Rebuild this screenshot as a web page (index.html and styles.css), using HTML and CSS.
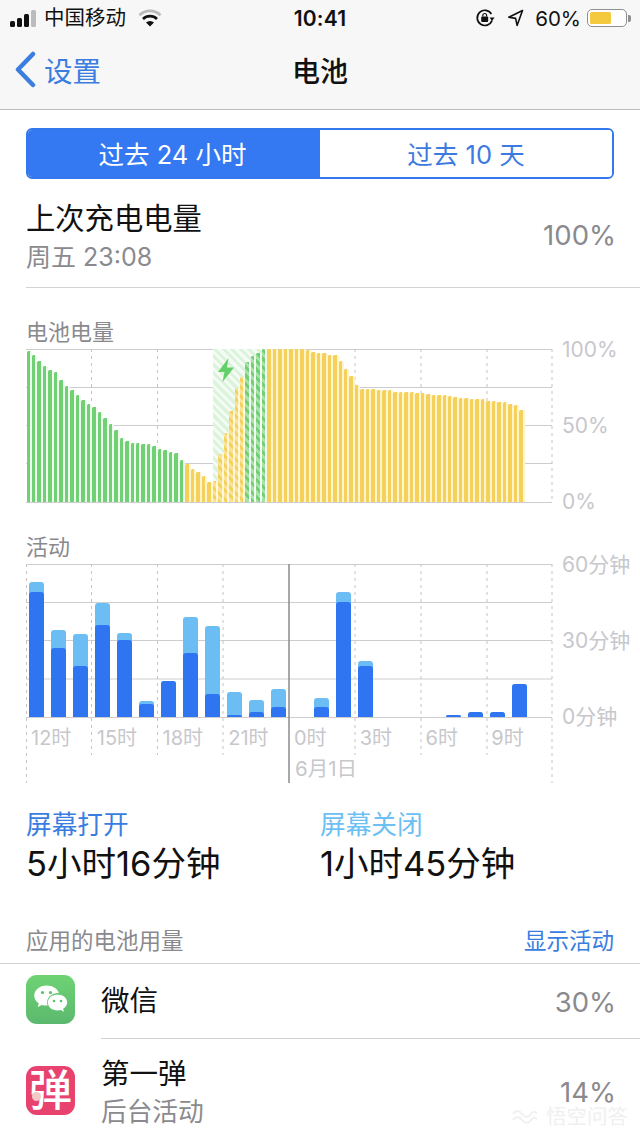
FILE: index.html
```html
<!DOCTYPE html>
<html lang="zh">
<head>
<meta charset="utf-8">
<title>电池</title>
<link rel="stylesheet" href="styles.css">
</head>
<body>
<div class="page">
  <header class="top">
    <div class="status">
      <div class="st-left">
        <span class="signal"><i></i><i></i><i></i><i class="off"></i></span>
        <span class="carrier">中国移动</span>
        <svg class="wifi" width="24" height="20" viewBox="0 0 24 20"><path d="M1.5 7.2a15 15 0 0 1 21 0" fill="none" stroke="#b9b9bb" stroke-width="2.6"/><path d="M5 11a10 10 0 0 1 14 0" fill="none" stroke="#111" stroke-width="2.6"/><path d="M8 14.6a5.6 5.6 0 0 1 8 0L12 18.6z" fill="#111"/></svg>
      </div>
      <div class="clock">10:41</div>
      <div class="st-right">
        <svg class="rot" width="20" height="20" viewBox="0 0 20 20"><path d="M17 12.5A7.6 7.6 0 1 1 16.4 6" fill="none" stroke="#111" stroke-width="1.7"/><path d="M14.6 9.6h5L17 13z" fill="#111"/><rect x="6.2" y="8.6" width="7" height="5.4" rx="1" fill="#111"/><path d="M7.8 8.6V7.4a1.9 1.9 0 0 1 3.8 0v1.2" fill="none" stroke="#111" stroke-width="1.2"/></svg>
        <svg class="loc" width="17" height="18" viewBox="0 0 17 18"><path d="M15.5 1.5 1.8 8.2l6.8 1.2 1.5 7z" fill="none" stroke="#111" stroke-width="1.6" stroke-linejoin="round"/></svg>
        <span class="pct">60%</span>
        <span class="battery"><span class="level"></span></span><span class="nub"></span>
      </div>
    </div>
    <nav class="nav">
      <div class="back">
        <svg width="22" height="37" viewBox="0 0 22 37"><path d="M19 3 4 18.500 19 34" fill="none" stroke="#3c7de0" stroke-width="4.500" stroke-linecap="round" stroke-linejoin="round"/></svg>
        <span>设置</span>
      </div>
      <h1>电池</h1>
      <div></div>
    </nav>
  </header>

  <div class="segment">
    <div class="seg on">过去 24 小时</div>
    <div class="seg">过去 10 天</div>
  </div>

  <section class="summary">
    <div>
      <div class="sum-title">上次充电电量</div>
      <div class="sum-sub">周五 23:08</div>
    </div>
    <div class="sum-val">100%</div>
  </section>

  <div class="chart-label first">电池电量</div>
  <div class="chart-row">
    <div class="plot">
      <svg class="grid-lines" width="528" height="155" viewBox="0 0 528 155">
        <g class="h"><line x1="0" x2="526" y1="0.5" y2="0.5"/><line x1="0" x2="526" y1="38.500" y2="38.500"/><line x1="0" x2="526" y1="76.500" y2="76.500"/><line x1="0" x2="526" y1="114.500" y2="114.500"/><line x1="0" x2="526" y1="153.500" y2="153.500"/></g>
        <g class="v"><line x1="65.500" x2="65.500" y1="0" y2="153"/><line x1="131.500" x2="131.500" y1="0" y2="153"/><line x1="197" x2="197" y1="0" y2="153"/><line x1="263" x2="263" y1="0" y2="153"/><line x1="329" x2="329" y1="0" y2="153"/><line x1="395" x2="395" y1="0" y2="153"/><line x1="461" x2="461" y1="0" y2="153"/><line x1="526" x2="526" y1="0" y2="153"/></g>
      </svg>
      <div class="hatch-back"></div>
      <div class="batt-bars">
        <i class="g" style="height:151.300px"></i><i class="g" style="height:147.300px"></i><i class="g" style="height:141px"></i><i class="g" style="height:136.300px"></i><i class="g" style="height:132px"></i><i class="g" style="height:130.300px"></i><i class="g" style="height:122.300px"></i><i class="g" style="height:116.300px"></i><i class="g" style="height:111.700px"></i><i class="g" style="height:107px"></i><i class="g" style="height:102.300px"></i><i class="g" style="height:98px"></i><i class="g" style="height:94.700px"></i><i class="g" style="height:90px"></i><i class="g" style="height:84px"></i><i class="g" style="height:78px"></i><i class="g" style="height:71.700px"></i><i class="g" style="height:63.700px"></i><i class="g" style="height:61px"></i><i class="g" style="height:59.300px"></i><i class="g" style="height:59.300px"></i><i class="g" style="height:58px"></i><i class="g" style="height:57.700px"></i><i class="g" style="height:55.700px"></i><i class="g" style="height:53.300px"></i><i class="g" style="height:51.700px"></i><i class="g" style="height:50px"></i><i class="g" style="height:48.700px"></i><i class="g" style="height:42.300px"></i>
        <i class="y" style="height:38.300px"></i><i class="y" style="height:33.300px"></i><i class="y" style="height:30.300px"></i><i class="y" style="height:25.700px"></i><i class="y" style="height:19.700px"></i><i class="y" style="height:21.300px"></i><i class="y" style="height:47.700px"></i><i class="y" style="height:68.700px"></i><i class="y" style="height:91.300px"></i><i class="y" style="height:114px"></i><i class="y" style="height:124.700px"></i>
        <i class="g" style="height:139.700px"></i><i class="g" style="height:145.700px"></i><i class="g" style="height:149px"></i><i class="g" style="height:153px"></i>
        <i class="y" style="height:153px"></i><i class="y" style="height:153px"></i><i class="y" style="height:153px"></i><i class="y" style="height:153px"></i><i class="y" style="height:153px"></i><i class="y" style="height:153px"></i><i class="y" style="height:153px"></i><i class="y" style="height:151.700px"></i><i class="y" style="height:150px"></i><i class="y" style="height:148.700px"></i><i class="y" style="height:148.700px"></i><i class="y" style="height:147.300px"></i><i class="y" style="height:147.300px"></i><i class="y" style="height:140.700px"></i><i class="y" style="height:133px"></i><i class="y" style="height:125.700px"></i><i class="y" style="height:117.300px"></i><i class="y" style="height:113.300px"></i><i class="y" style="height:113.300px"></i><i class="y" style="height:113.300px"></i><i class="y" style="height:112px"></i><i class="y" style="height:111.700px"></i><i class="y" style="height:111.700px"></i><i class="y" style="height:110.300px"></i><i class="y" style="height:110.300px"></i><i class="y" style="height:110.300px"></i><i class="y" style="height:110.300px"></i><i class="y" style="height:109px"></i><i class="y" style="height:109px"></i><i class="y" style="height:108.300px"></i><i class="y" style="height:107px"></i><i class="y" style="height:107px"></i><i class="y" style="height:107px"></i><i class="y" style="height:105.700px"></i><i class="y" style="height:105.300px"></i><i class="y" style="height:104.300px"></i><i class="y" style="height:103.700px"></i><i class="y" style="height:102.700px"></i><i class="y" style="height:102.700px"></i><i class="y" style="height:102.700px"></i><i class="y" style="height:101.300px"></i><i class="y" style="height:101.300px"></i><i class="y" style="height:99.700px"></i><i class="y" style="height:99.700px"></i><i class="y" style="height:98.300px"></i><i class="y" style="height:97px"></i><i class="y" style="height:91.700px"></i>
      </div>
      <div class="hatch-front"></div>
      <svg class="bolt" width="18" height="24" viewBox="0 0 18 24"><path d="M11.500 0 1 14h6.500L5.500 24 17 9.500h-7z" fill="#63cf68"/></svg>
    </div>
    <div class="y-axis"><span>100%</span><span>50%</span><span>0%</span></div>
  </div>

  <div class="chart-label">活动</div>
  <div class="chart-row">
    <div class="plot tall">
      <svg class="grid-lines" width="528" height="221" viewBox="0 0 528 221">
        <g class="h"><line x1="0" x2="526" y1="0.5" y2="0.5"/><line x1="0" x2="526" y1="38.500" y2="38.500"/><line x1="0" x2="526" y1="76.500" y2="76.500"/><line x1="0" x2="526" y1="115" y2="115"/><line x1="0" x2="526" y1="153.500" y2="153.500"/></g>
        <g class="v"><line x1="0.5" x2="0.5" y1="0" y2="219"/><line x1="65.500" x2="65.500" y1="0" y2="191"/><line x1="131.500" x2="131.500" y1="0" y2="191"/><line x1="197" x2="197" y1="0" y2="191"/><line x1="329" x2="329" y1="0" y2="191"/><line x1="395" x2="395" y1="0" y2="191"/><line x1="461" x2="461" y1="0" y2="191"/><line x1="526" x2="526" y1="0" y2="219"/></g>
        <line class="midnight" x1="263" x2="263" y1="0" y2="219"/>
      </svg>
      <div class="act-bars">
        <div class="col" style="height:135.300px"><div class="dark" style="height:125.300px"></div></div>
        <div class="col" style="height:86.700px"><div class="dark" style="height:69px"></div></div>
        <div class="col" style="height:83.300px"><div class="dark" style="height:51.300px"></div></div>
        <div class="col" style="height:114.300px"><div class="dark" style="height:92px"></div></div>
        <div class="col" style="height:83.700px"><div class="dark" style="height:76.700px"></div></div>
        <div class="col" style="height:16.300px"><div class="dark" style="height:12.700px"></div></div>
        <div class="col" style="height:35.700px"><div class="dark" style="height:35.700px"></div></div>
        <div class="col" style="height:100.300px"><div class="dark" style="height:64px"></div></div>
        <div class="col" style="height:91.300px"><div class="dark" style="height:23px"></div></div>
        <div class="col" style="height:24.700px"><div class="dark" style="height:2.300px"></div></div>
        <div class="col" style="height:16.700px"><div class="dark" style="height:5px"></div></div>
        <div class="col" style="height:28px"><div class="dark" style="height:10px"></div></div>
        <div class="col" style="height:0"></div>
        <div class="col" style="height:18.700px"><div class="dark" style="height:10px"></div></div>
        <div class="col" style="height:125px"><div class="dark" style="height:115px"></div></div>
        <div class="col" style="height:56.300px"><div class="dark" style="height:51.300px"></div></div>
        <div class="col" style="height:0"></div>
        <div class="col" style="height:0"></div>
        <div class="col" style="height:0"></div>
        <div class="col" style="height:2.300px"><div class="dark" style="height:2.300px"></div></div>
        <div class="col" style="height:5px"><div class="dark" style="height:5px"></div></div>
        <div class="col" style="height:5px"><div class="dark" style="height:5px"></div></div>
        <div class="col" style="height:33px"><div class="dark" style="height:33px"></div></div>
        <div class="col" style="height:0"></div>
      </div>
      <div class="hours"><span>12时</span><span>15时</span><span>18时</span><span>21时</span><span>0时</span><span>3时</span><span>6时</span><span>9时</span></div>
      <div class="date">6月1日</div>
    </div>
    <div class="y-axis"><span>60分钟</span><span>30分钟</span><span>0分钟</span></div>
  </div>

  <section class="stats">
    <div>
      <div class="stat-label on">屏幕打开</div>
      <div class="stat-value">5小时16分钟</div>
    </div>
    <div>
      <div class="stat-label off">屏幕关闭</div>
      <div class="stat-value">1小时45分钟</div>
    </div>
  </section>

  <div class="usage-head">
    <span class="usage-title">应用的电池用量</span>
    <span class="usage-link">显示活动</span>
  </div>

  <div class="app first-app">
    <svg class="icon" width="49" height="49" viewBox="0 0 49 49">
      <defs><linearGradient id="wx" x1="0" y1="0" x2="0" y2="1"><stop offset="0" stop-color="#6fd273"/><stop offset="1" stop-color="#5bb96f"/></linearGradient></defs>
      <rect width="49" height="49" rx="11" fill="url(#wx)"/>
      <path d="M20.500 10.500c-6.800 0-12.300 4.500-12.300 10.100 0 3.200 1.800 6 4.600 7.900l-1.100 3.600 4.100-2.200c1.300.4 2.800.6 4.300.6.500 0 1 0 1.500-.1-.3-1-.5-2-.5-3 0-5.400 5-9.500 11-9.500h.8c-1.300-4-6.200-7.400-12.400-7.400z" fill="#fff"/>
      <path d="M31.500 19.500c-5.300 0-9.700 3.600-9.700 8s4.400 8 9.700 8c1.100 0 2.200-.2 3.200-.5l3.300 1.800-.9-3c2.500-1.500 4.100-3.800 4.100-6.300 0-4.400-4.400-8-9.700-8z" fill="#fff"/>
      <circle cx="16.500" cy="17.500" r="1.600" fill="#5fbf6d"/><circle cx="24.500" cy="17.500" r="1.600" fill="#5fbf6d"/><circle cx="28" cy="26" r="1.300" fill="#5fbf6d"/><circle cx="35" cy="26" r="1.300" fill="#5fbf6d"/>
    </svg>
    <div class="app-name">微信</div>
    <div class="app-val">30%</div>
  </div>
  <div class="app second-app">
    <div class="icon dan">弹<i class="dot"></i></div>
    <div class="app-text">
      <div class="app-name">第一弹</div>
      <div class="app-sub">后台活动</div>
    </div>
    <div class="app-val">14%</div>
  </div>
  <div class="watermark">
    <svg width="26" height="14" viewBox="0 0 26 14"><path d="M1 4c3-4 6-4 9 0s6 4 9 0 4-2 6-1M1 10c3-4 6-4 9 0s6 4 9 0 4-2 6-1" fill="none" stroke="#f0f0f0" stroke-width="2"/></svg>
    <span>悟空问答</span>
  </div>
</div>
</body>
</html>
```
FILE: styles.css
```css
* { box-sizing: border-box; }
html, body { margin: 0; padding: 0; background: #fff; }
body { font-family: Inter, "Noto Sans CJK SC", "Liberation Sans", sans-serif; color: #111; }
.page { position: relative; width: 640px; height: 1138px; overflow: hidden; background: #fff; }

.top { height: 110px; background: #f7f7f8; border-bottom: 1px solid #bdbdc1; }
.status { height: 36px; display: grid; grid-template-columns: 1fr auto 1fr; align-items: center; }
.st-left { display: flex; align-items: center; padding-left: 10px; }
.signal { display: flex; align-items: flex-end; gap: 2px; height: 18px; }
.signal i { width: 5px; background: #111; border-radius: 1.500px; }
.signal i:nth-child(1) { height: 6px; }
.signal i:nth-child(2) { height: 9px; }
.signal i:nth-child(3) { height: 13px; }
.signal i:nth-child(4) { height: 17px; }
.signal i.off { background: #bcbcbe; }
.carrier { margin-left: 8px; font-size: 20.500px; line-height: 36px; }
.wifi { margin-left: 12px; }
.clock { font-size: 21px; font-weight: 600; letter-spacing: .2px; }
.st-right { display: flex; align-items: center; justify-content: flex-end; padding-right: 9px; }
.rot { margin-right: 12px; }
.loc { margin-right: 11px; }
.pct { font-size: 20.500px; margin-right: 6px; }
.battery { width: 40px; height: 18px; border: 1.500px solid #8f8f92; border-radius: 5px; padding: 2px; display: flex; background: #fff; }
.level { width: 21px; background: #f5c93e; border-radius: 1.500px; }
.nub { width: 3px; height: 7px; background: #8f8f92; border-radius: 0 2px 2px 0; margin-left: 1px; }

.nav { height: 73px; display: grid; grid-template-columns: 1fr auto 1fr; align-items: center; padding-bottom: 6px; }
.back { display: flex; align-items: center; padding-left: 14px; gap: 8px; color: #3c7de0; font-size: 28.500px; }
.nav h1 { margin: 0; font-size: 28px; font-weight: 500; color: #111; }

.segment { margin: 18px 26px 0; height: 51px; display: grid; grid-template-columns: 1fr 1fr; border: 2px solid #3478ee; border-radius: 6px; overflow: hidden; }
.seg { display: flex; align-items: center; justify-content: center; padding-bottom: 3px; font-size: 25.500px; color: #3d7adf; background: #fff; }
.seg.on { background: #3478f2; color: #fff; padding-right: 3px; }

.summary { margin-left: 26px; padding: 19px 24px 11px 0; display: flex; align-items: center; justify-content: space-between; border-bottom: 1px solid #d2d2d5; height: 109px; }
.sum-title { font-size: 29.300px; line-height: 38px; color: #111; padding-top: 1px; }
.sum-sub { font-size: 25px; line-height: 38px; color: #8a8a8e; }
.sum-val { font-size: 27.500px; color: #8a8a8e; margin-top: -4px; }

.chart-label { margin: 30px 0 2px 26px; height: 30px; line-height: 30px; font-size: 22px; color: #8a8a8e; }
.chart-label.first { margin-top: 29px; }
.chart-row { display: flex; margin-left: 26px; }
.plot { position: relative; width: 526px; height: 153px; flex: none; }
.plot.tall { height: 220px; }
.grid-lines { position: absolute; left: 0; top: 0; overflow: visible; }
.grid-lines .h line { stroke: #cdcdd0; stroke-width: 1; }
.grid-lines .v line { stroke: #c4c4c7; stroke-width: 1; stroke-dasharray: 3 4; }
.grid-lines .midnight { stroke: #8b8b8e; stroke-width: 1.500; }

.hatch-back { position: absolute; left: 187px; top: 0; width: 54px; height: 153px; background: repeating-linear-gradient(45deg, #c6ebc6 0 3px, #f4fbf4 3px 6px); }
.hatch-front { position: absolute; left: 187px; top: 0; width: 54px; height: 153px; background: repeating-linear-gradient(45deg, rgba(255,255,255,.38) 0 3px, transparent 3px 6px); }
.bolt { position: absolute; left: 191px; top: 9px; }
.batt-bars { position: relative; height: 153px; display: grid; grid-template-columns: repeat(96, 1fr); align-items: end; margin-left: .5px; }
.batt-bars i { display: block; width: 100%; border-radius: 1.500px 1.500px 0 0; }
.batt-bars .g { background: linear-gradient(90deg, #72d074 0 64%, #eefaee 64%); }
.batt-bars .y { background: linear-gradient(90deg, #f5d05a 0 64%, #fff5cc 64%); }

.y-axis { width: 88px; height: 153px; padding: 1px 0 0 10px; display: flex; flex-direction: column; justify-content: space-between; font-size: 21px; color: #c7c7cc; }
.y-axis span { display: block; height: 0; line-height: 0; white-space: nowrap; }

.act-bars { position: relative; height: 153px; display: grid; grid-template-columns: repeat(24, 1fr); align-items: end; justify-items: center; }
.col { width: 15px; display: flex; align-items: flex-end; background: #6dbdf5; border-radius: 3px 3px 0 0; }
.dark { width: 100%; background: #2f74f1; border-radius: 3px 3px 0 0; }
.hours { position: relative; margin-top: 6px; height: 30px; display: grid; grid-template-columns: repeat(8, 1fr); }
.hours span { padding-left: 5px; font-size: 20px; line-height: 30px; color: #c7c7cc; }
.date { position: relative; margin-left: 269px; margin-top: 1px; font-size: 20.500px; line-height: 30px; color: #c7c7cc; }

.stats { display: grid; grid-template-columns: 294px 294px; margin: 26px 0 0 26px; }
.stat-label { font-size: 25.700px; line-height: 30px; }
.stat-label.on { color: #3a7de0; }
.stat-label.off { color: #6cc0f3; }
.stat-value { margin-top: 6px; font-size: 34.500px; line-height: 36px; color: #111; }

.usage-head { margin-top: 44px; height: 37px; padding: 0 26px; display: flex; justify-content: space-between; line-height: 30px; }
.usage-title { font-size: 22.500px; color: #8a8a8e; }
.usage-link { font-size: 22.500px; color: #3a7de0; }

.app { display: flex; align-items: center; padding: 0 24px 0 26px; position: relative; }
.first-app { height: 76px; border-top: 1px solid #d2d2d5; }
.first-app .icon { margin-top: -4px; }
.first-app::after { content: ""; position: absolute; left: 101px; right: 0; bottom: 0; height: 1px; background: #d2d2d5; }
.second-app { height: 100px; }
.second-app .icon { margin-top: 2px; }
.icon { flex: none; width: 49px; height: 49px; margin-right: 26px; }
.dan { position: relative; border-radius: 11px; background: #e8426f; color: #fff; font-size: 43px; font-weight: 500; line-height: 49px; text-align: center; }
.dot { position: absolute; left: 6px; top: 26px; width: 9px; height: 9px; border-radius: 50%; background: #f3c9c4; }
.app-name { font-size: 28.500px; line-height: 38px; color: #111; margin-top: -1px; }
.app-text { margin-top: 8px; }
.app-sub { font-size: 25.700px; line-height: 38px; color: #8a8a8e; }
.app-val { margin-left: auto; font-size: 27.500px; line-height: 28px; color: #8a8a8e; }
.second-app .app-val { margin-top: 6px; }

.watermark { position: absolute; right: 12px; top: 1108px; display: flex; align-items: center; gap: 8px; font-size: 20.500px; line-height: 18px; color: #f0f0f0; }
```
